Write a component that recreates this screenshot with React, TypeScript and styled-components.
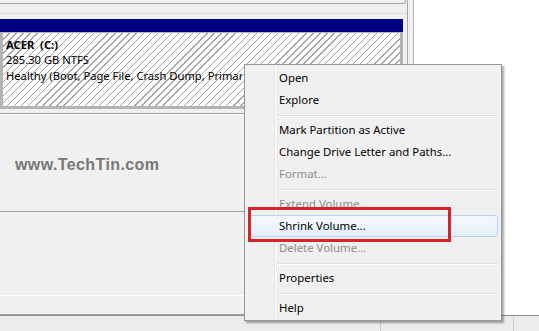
import styled, { createGlobalStyle } from "styled-components";

const GlobalStyle = createGlobalStyle`
  html, body {
    margin: 0;
    padding: 0;
    background: #ffffff;
  }
  body {
    font-family: "Noto Sans", "Open Sans", sans-serif;
    font-size: 11.2px;
    color: #000;
  }
`;

const Window = styled.div`
  position: relative;
  width: 539px;
  height: 331px;
  overflow: hidden;
  display: flex;
  flex-direction: column;
`;

const Main = styled.div`
  display: flex;
  height: 315px;
`;

const DiskPanel = styled.div`
  width: 407px;
  background: #f0f0f0;
  border-right: 1px solid #a6a6a6;
  display: flex;
  flex-direction: column;
`;

const Gutter = styled.div`
  width: 5px;
  background: #f0f0f0;
  border-right: 1px solid #b9b9b9;
`;

const PrevBox = styled.div`
  height: 3px;
  margin-right: 1px;
  border-bottom: 1px solid #a8a8a8;
  border-right: 1px solid #a8a8a8;
  border-bottom-right-radius: 3px;
`;

const Divider = styled.div`
  margin: 9px 0 5px;
  height: 1px;
  background: #dcdcdc;
`;

const Volume = styled.div`
  width: 403px;
  display: flex;
  flex-direction: column;
`;

const VolumeHead = styled.div`
  height: 13px;
  background: #000080;
`;

const VolumeBody = styled.div`
  height: 69px;
  border: 3px solid #b4b4b4;
  border-top-width: 1px;
  padding: 4px 0 0 3px;
  background: repeating-linear-gradient(
    135deg,
    #ffffff 0 4px,
    #a2a2a2 4px 5px
  );
  line-height: 15.5px;
`;

/* the context menu hides the rest of the status line, so clip it where the menu starts */
const VolumeText = styled.div`
  width: 236px;
  white-space: nowrap;
  overflow: hidden;
`;

const VolumeName = styled.div`
  font-weight: bold;
`;

const Row = styled.div<{ $h: number; $line: string }>`
  height: ${(p) => p.$h}px;
  border-bottom: 1px solid ${(p) => p.$line};
`;

const FirstRow = styled(Row)`
  margin-top: 4px;
  border-top: 1px solid #a0a0a0;
  box-shadow: inset 0 1px #ffffff;
  padding: 41px 0 0 15px;
  box-sizing: content-box;
`;

const Watermark = styled.div`
  font-family: "Liberation Sans", Arial, sans-serif;
  font-weight: bold;
  font-size: 16px;
  letter-spacing: 0.4px;
  line-height: 19px;
  color: #777777;
`;

const Blank = styled.div`
  flex: 1;
  background: #ffffff;
`;

const StatusBar = styled.div`
  height: 15px;
  background: #eeeceb;
  border-top: 1px solid #8e8e8e;
  display: grid;
  grid-template-columns: 381px 133px 1fr;
`;

const StatusCell = styled.div`
  border-right: 1px solid #cfcdcc;
  &:last-child {
    border-right: none;
  }
`;

const Menu = styled.div`
  position: absolute;
  left: 244px;
  top: 64px;
  width: 252px;
  padding: 2px 2px 1px;
  background: #f0f0f0;
  border: 1px solid #979797;
  box-shadow: 2px 2px 2px rgba(0, 0, 0, 0.35);
  font-size: 11.4px;
  &::before {
    content: "";
    position: absolute;
    left: 29px;
    top: 2px;
    bottom: 1px;
    width: 1px;
    background: #e2e3e3;
    box-shadow: 1px 0 #ffffff;
  }
`;

const Item = styled.div<{ $disabled?: boolean; $hover?: boolean }>`
  position: relative;
  height: 22px;
  line-height: 22px;
  padding-left: 32px;
  color: ${(p) => (p.$disabled ? "#8d8d8d" : "#000")};
  white-space: nowrap;
  ${(p) =>
    p.$hover &&
    `
    margin: 0 1px 0 1px;
    padding-left: 30px;
    height: 20px;
    line-height: 20px;
    border: 1px solid #b8d2ef;
    border-radius: 3px;
    background: linear-gradient(#f3f8fd, #e6f0fb);
  `}
`;

const Separator = styled.div`
  height: 8px;
  position: relative;
  &::after {
    content: "";
    position: absolute;
    left: 30px;
    right: 1px;
    top: 4px;
    height: 1px;
    background: #e0e0e0;
    box-shadow: 0 1px #ffffff;
  }
`;

const Callout = styled.div`
  position: absolute;
  left: 248px;
  top: 207px;
  width: 197px;
  height: 29px;
  border: 3px solid #d7232b;
`;

type Entry = { label?: string; disabled?: boolean; hover?: boolean; sep?: boolean };

const entries: Entry[] = [
  { label: "Open" },
  { label: "Explore" },
  { sep: true },
  { label: "Mark Partition as Active" },
  { label: "Change Drive Letter and Paths..." },
  { label: "Format...", disabled: true },
  { sep: true },
  { label: "Extend Volume...", disabled: true },
  { label: "Shrink Volume...", hover: true },
  { label: "Delete Volume...", disabled: true },
  { sep: true },
  { label: "Properties" },
  { sep: true },
  { label: "Help" },
];

function App() {
  return (
    <Window>
      <GlobalStyle />
      <Main>
        <DiskPanel>
          <PrevBox />
          <Divider />
          <Volume>
            <VolumeHead />
            <VolumeBody>
              <VolumeText>
                <VolumeName>ACER&nbsp; (C:)</VolumeName>
                <div>285.30 GB NTFS</div>
                <div>Healthy (Boot, Page File, Crash Dump, Primary Partition)</div>
              </VolumeText>
            </VolumeBody>
          </Volume>
          <FirstRow $h={56} $line="#a0a0a0">
            <Watermark>www.TechTin.com</Watermark>
          </FirstRow>
          <Row $h={84} $line="#ffffff" />
          <Row $h={18} $line="#a0a0a0" />
        </DiskPanel>
        <Gutter />
        <Blank />
      </Main>
      <StatusBar>
        <StatusCell />
        <StatusCell />
        <StatusCell />
      </StatusBar>

      <Menu>
        {entries.map((e, i) =>
          e.sep ? (
            <Separator key={i} />
          ) : (
            <Item key={i} $disabled={e.disabled} $hover={e.hover}>
              {e.label}
            </Item>
          )
        )}
      </Menu>
      <Callout />
    </Window>
  );
}

export default App;
